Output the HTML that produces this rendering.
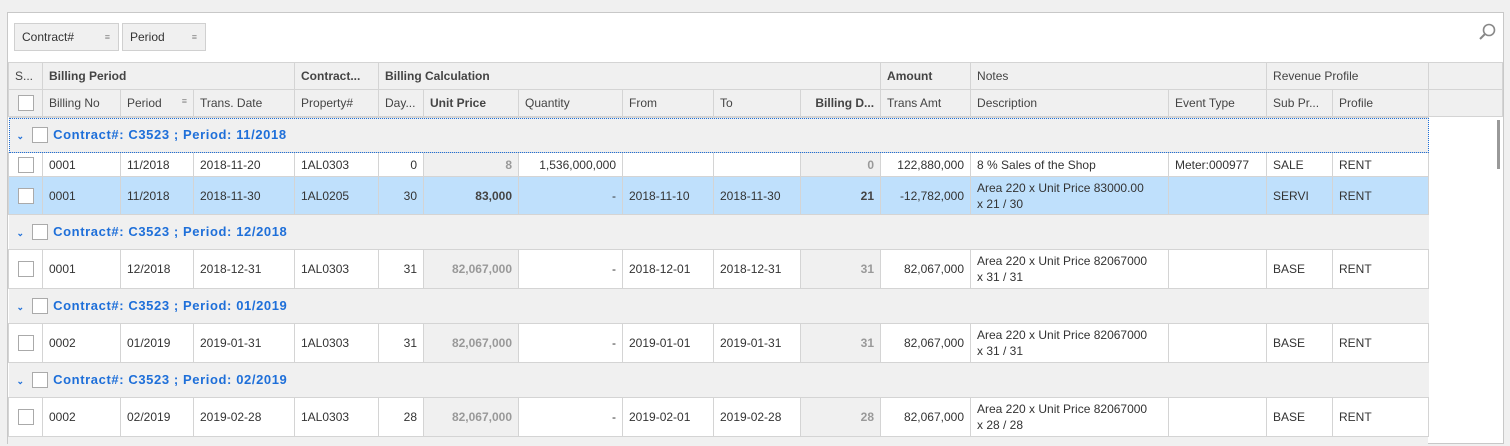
<!DOCTYPE html><html><head><style>
html,body{margin:0;width:1510px;height:446px;overflow:hidden}
body{background:#f0f0f0;font-family:"Liberation Sans",sans-serif;font-size:12px;color:#333;position:relative}
.panel{position:absolute;left:7px;top:12px;width:1495px;height:430px;background:#fff;border:1px solid #c8c8c8}
.gb{position:absolute;top:23px;height:28px;background:#f0f0f0;border:1px solid #d0d0d0;line-height:27px;padding-left:7px;box-sizing:border-box}
.gb i{position:absolute;right:8px;top:0;font-style:normal;font-size:9px;color:#888}
table{position:absolute;left:8px;border-collapse:collapse;table-layout:fixed}
td{border:1px solid #d4d4d4;padding:0 6px;white-space:nowrap;overflow:hidden;text-overflow:ellipsis;box-sizing:border-box}
.h td{background:#f0f0f0;height:27px;color:#444}
b{color:#444}
.r{text-align:right}
.g td{background:#f0f0f0;border-left:none;border-right:none;height:35px;font-weight:bold;color:#1e6fd9;font-size:13px;padding-left:8px}
.g .t{letter-spacing:0.6px;margin-left:2px}
.sh{background:#f0f0f0;color:#999;font-weight:bold;text-align:right}
.sel td{background:#bfe0fc}
.cb{display:inline-block;width:14px;height:14px;border:1px solid #aaa;background:#fff;vertical-align:middle}
.desc{white-space:normal;line-height:16px}
.ch{display:inline-block;width:9px;font-size:9px;color:#1e6fd9;margin-right:6px}
</style></head><body>
<div class="panel"></div>
<div style="position:absolute;left:8px;top:437px;width:1420px;height:9px;background:#f0f0f0"></div>
<div class="gb" style="left:14px;width:105px">Contract#<i>≡</i></div>
<div class="gb" style="left:122px;width:84px">Period<i>≡</i></div>
<svg style="position:absolute;left:1478px;top:22px" width="20" height="20"><circle cx="11" cy="8" r="5.5" fill="none" stroke="#888" stroke-width="1.6"/><line x1="7" y1="12" x2="2" y2="17" stroke="#888" stroke-width="2"/></svg>
<div style="position:absolute;left:1497px;top:120px;width:3px;height:49px;background:#999"></div>
<table style="top:62px;width:1494px">
<colgroup><col width=34><col width=78><col width=73><col width=101><col width=84><col width=45><col width=95><col width=104><col width=91><col width=87><col width=80><col width=90><col width=198><col width=98><col width=66><col width=96><col width=74></colgroup>
<tr class="h"><td>S...</td><td colspan=3><b>Billing Period</b></td><td><b>Contract...</b></td><td colspan=6><b>Billing Calculation</b></td><td><b>Amount</b></td><td colspan=2>Notes</td><td colspan=2>Revenue Profile</td><td></td></tr>
<tr class="h"><td style="text-align:center"><span class="cb"></span></td><td>Billing No</td><td>Period <span style="float:right;font-size:9px;color:#888">≡</span></td><td>Trans. Date</td><td>Property#</td><td>Day...</td><td><b>Unit Price</b></td><td>Quantity</td><td>From</td><td>To</td><td class="r"><b>Billing D...</b></td><td>Trans Amt</td><td>Description</td><td>Event Type</td><td>Sub Pr...</td><td>Profile</td><td></td></tr>
</table>
<table style="top:117px;width:1420px">
<colgroup><col width=34><col width=78><col width=73><col width=101><col width=84><col width=45><col width=95><col width=104><col width=91><col width=87><col width=80><col width=90><col width=198><col width=98><col width=66><col width=96></colgroup>
<tr class="g"><td colspan=16 style="outline:1px dotted #1e6fd9;outline-offset:-1px"><span class="ch">⌄</span><span class="cb"></span> <span class="t">Contract#: C3523 ; Period: 11/2018</span></td></tr>
<tr style="height:24px"><td style="text-align:center"><span class="cb"></span></td><td>0001</td><td>11/2018</td><td>2018-11-20</td><td>1AL0303</td><td class="r">0</td><td class="sh">8</td><td class="r">1,536,000,000</td><td></td><td></td><td class="sh">0</td><td class="r">122,880,000</td><td>8 % Sales of the Shop</td><td>Meter:000977</td><td>SALE</td><td>RENT</td></tr>
<tr class="sel" style="height:38px"><td style="text-align:center"><span class="cb"></span></td><td>0001</td><td>11/2018</td><td>2018-11-30</td><td>1AL0205</td><td class="r">30</td><td class="r"><b>83,000</b></td><td class="r">-</td><td>2018-11-10</td><td>2018-11-30</td><td class="r"><b>21</b></td><td class="r">-12,782,000</td><td class="desc">Area 220 x Unit Price 83000.00<br>x 21 / 30</td><td></td><td>SERVI</td><td>RENT</td></tr>
<tr class="g"><td colspan=16><span class="ch">⌄</span><span class="cb"></span> <span class="t">Contract#: C3523 ; Period: 12/2018</span></td></tr>
<tr style="height:39px"><td style="text-align:center"><span class="cb"></span></td><td>0001</td><td>12/2018</td><td>2018-12-31</td><td>1AL0303</td><td class="r">31</td><td class="sh">82,067,000</td><td class="r">-</td><td>2018-12-01</td><td>2018-12-31</td><td class="sh">31</td><td class="r">82,067,000</td><td class="desc">Area 220 x Unit Price 82067000<br>x 31 / 31</td><td></td><td>BASE</td><td>RENT</td></tr>
<tr class="g"><td colspan=16><span class="ch">⌄</span><span class="cb"></span> <span class="t">Contract#: C3523 ; Period: 01/2019</span></td></tr>
<tr style="height:39px"><td style="text-align:center"><span class="cb"></span></td><td>0002</td><td>01/2019</td><td>2019-01-31</td><td>1AL0303</td><td class="r">31</td><td class="sh">82,067,000</td><td class="r">-</td><td>2019-01-01</td><td>2019-01-31</td><td class="sh">31</td><td class="r">82,067,000</td><td class="desc">Area 220 x Unit Price 82067000<br>x 31 / 31</td><td></td><td>BASE</td><td>RENT</td></tr>
<tr class="g"><td colspan=16><span class="ch">⌄</span><span class="cb"></span> <span class="t">Contract#: C3523 ; Period: 02/2019</span></td></tr>
<tr style="height:39px"><td style="text-align:center"><span class="cb"></span></td><td>0002</td><td>02/2019</td><td>2019-02-28</td><td>1AL0303</td><td class="r">28</td><td class="sh">82,067,000</td><td class="r">-</td><td>2019-02-01</td><td>2019-02-28</td><td class="sh">28</td><td class="r">82,067,000</td><td class="desc">Area 220 x Unit Price 82067000<br>x 28 / 28</td><td></td><td>BASE</td><td>RENT</td></tr>
</table>
</body></html>
